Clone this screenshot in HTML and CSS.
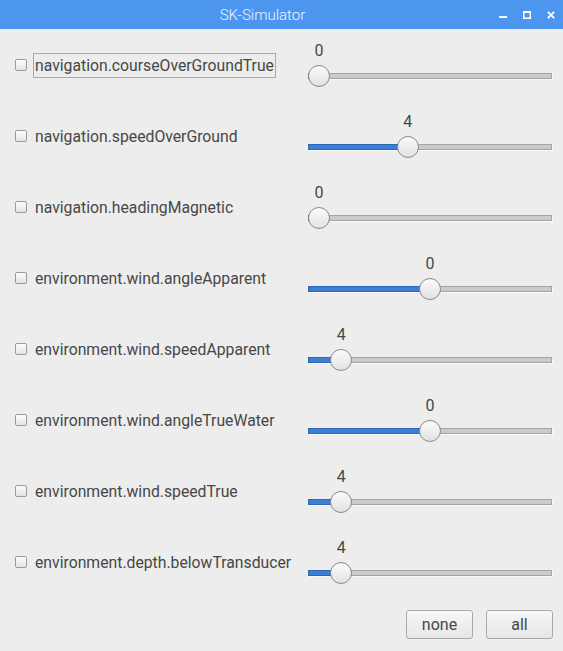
FILE: index.html
```html
<!DOCTYPE html>
<html>
<head>
<meta charset="utf-8">
<link rel="stylesheet" href="styles.css">
</head>
<body>
<div class="window">
  <div class="titlebar">
    <span class="title">SK-Simulator</span>
    <div class="controls">
      <svg class="ctl" width="8" height="8" viewBox="0 0 8 8"><rect x="0" y="5" width="8" height="2" fill="#fff"/></svg>
      <svg class="ctl" width="8" height="8" viewBox="0 0 8 8"><rect x="0.75" y="0.75" width="6.5" height="6.5" fill="none" stroke="#fff" stroke-width="1.5"/><rect x="0" y="0" width="8" height="2" fill="#fff"/></svg>
      <svg class="ctl" width="8" height="8" viewBox="0 0 8 8"><path d="M0.8 0.8 L7.2 7.2 M7.2 0.8 L0.8 7.2" stroke="#fff" stroke-width="1.8"/></svg>
    </div>
  </div>
  <div class="content">
    <div class="row">
      <div class="left"><span class="cb"></span><span class="label focused">navigation.courseOverGroundTrue</span></div>
      <div class="slider"><div class="rail" style="--p:0%"><span class="val">0</span><div class="track"><div class="fill"></div></div><span class="thumb"></span></div></div>
    </div>
    <div class="row">
      <div class="left"><span class="cb"></span><span class="label">navigation.speedOverGround</span></div>
      <div class="slider"><div class="rail" style="--p:40%"><span class="val">4</span><div class="track"><div class="fill"></div></div><span class="thumb"></span></div></div>
    </div>
    <div class="row">
      <div class="left"><span class="cb"></span><span class="label">navigation.headingMagnetic</span></div>
      <div class="slider"><div class="rail" style="--p:0%"><span class="val">0</span><div class="track"><div class="fill"></div></div><span class="thumb"></span></div></div>
    </div>
    <div class="row">
      <div class="left"><span class="cb"></span><span class="label">environment.wind.angleApparent</span></div>
      <div class="slider"><div class="rail" style="--p:50%"><span class="val">0</span><div class="track"><div class="fill"></div></div><span class="thumb"></span></div></div>
    </div>
    <div class="row">
      <div class="left"><span class="cb"></span><span class="label">environment.wind.speedApparent</span></div>
      <div class="slider"><div class="rail" style="--p:10%"><span class="val">4</span><div class="track"><div class="fill"></div></div><span class="thumb"></span></div></div>
    </div>
    <div class="row">
      <div class="left"><span class="cb"></span><span class="label">environment.wind.angleTrueWater</span></div>
      <div class="slider"><div class="rail" style="--p:50%"><span class="val">0</span><div class="track"><div class="fill"></div></div><span class="thumb"></span></div></div>
    </div>
    <div class="row">
      <div class="left"><span class="cb"></span><span class="label">environment.wind.speedTrue</span></div>
      <div class="slider"><div class="rail" style="--p:10%"><span class="val">4</span><div class="track"><div class="fill"></div></div><span class="thumb"></span></div></div>
    </div>
    <div class="row">
      <div class="left"><span class="cb"></span><span class="label">environment.depth.belowTransducer</span></div>
      <div class="slider"><div class="rail" style="--p:10%"><span class="val">4</span><div class="track"><div class="fill"></div></div><span class="thumb"></span></div></div>
    </div>
    <div class="buttons">
      <button class="btn">none</button>
      <button class="btn">all</button>
    </div>
  </div>
</div>
</body>
</html>
```
FILE: styles.css
```css
* { box-sizing: border-box; }
html, body { margin: 0; padding: 0; }
body {
  width: 563px;
  height: 651px;
  background: #ededed;
  font-family: Roboto, "Liberation Sans", sans-serif;
  color: #474747;
  overflow: hidden;
}
.window { width: 563px; height: 651px; display: flex; flex-direction: column; }
.titlebar {
  height: 29px;
  background: #4d96f0;
  display: flex;
  align-items: center;
  justify-content: center;
  position: relative;
  flex: none;
}
.title {
  color: #eef4ff;
  font-size: 15px;
  font-weight: 300;
  margin-right: 38px;
}
.controls {
  position: absolute;
  right: 8px;
  top: 11px;
  display: flex;
  gap: 16px;
}
.ctl { display: block; }
.content { display: flex; flex-direction: column; }
.row {
  height: 71px;
  display: flex;
}
.left {
  width: 308px;
  display: flex;
  align-items: center;
  height: 25px;
  margin-top: 23.5px;
  padding-left: 15px;
  gap: 6px;
}
.cb {
  width: 12px;
  height: 12px;
  border: 1px solid #9a9a9a;
  border-radius: 2px;
  background: linear-gradient(#fdfdfd, #e4e4e4);
  flex: none;
}
.label {
  font-size: 15.75px;
  line-height: 23px;
  border: 1px solid transparent;
  padding: 0 1px;
}
.label.focused { border-color: #a8a8a8; }
.slider {
  width: 244px;
  padding: 0 11px;
  position: relative;
}
.rail {
  position: relative;
  height: 71px;
}
.val {
  position: absolute;
  left: var(--p);
  top: 12px;
  transform: translateX(-50%);
  font-size: 16px;
  line-height: 20px;
}
.track {
  position: absolute;
  left: -11px;
  right: -11px;
  top: 44px;
  height: 6px;
  background: #cbcbcb;
  border: 1px solid #a4a4a4;
  box-shadow: 1px 1px 0 #fafafa;
}
.fill {
  position: absolute;
  left: -1px;
  top: -1px;
  bottom: -1px;
  background: #3d7fd6;
  border: 1px solid #2f68b5;
}
.rail[style*="--p:0%"] .fill { width: 12px; }
.rail[style*="--p:10%"] .fill { width: calc(11px + 22.2px); }
.rail[style*="--p:40%"] .fill { width: calc(11px + 88.8px); }
.rail[style*="--p:50%"] .fill { width: calc(11px + 111px); }
.thumb {
  position: absolute;
  left: var(--p);
  top: 36px;
  width: 22px;
  height: 22px;
  transform: translateX(-50%);
  border-radius: 50%;
  border: 1px solid #8a8a8a;
  background: linear-gradient(#fbfbfb, #e2e2e2);
}
.buttons {
  display: flex;
  justify-content: flex-end;
  gap: 13px;
  padding: 13px 10px 0 0;
}
.btn {
  width: 67px;
  height: 29px;
  border: 1px solid #a9a9a9;
  border-radius: 3px;
  background: linear-gradient(#f7f7f7, #e6e6e6);
  font-family: Roboto, "Liberation Sans", sans-serif;
  font-size: 16px;
  color: #474747;
  padding: 0;
}
```
